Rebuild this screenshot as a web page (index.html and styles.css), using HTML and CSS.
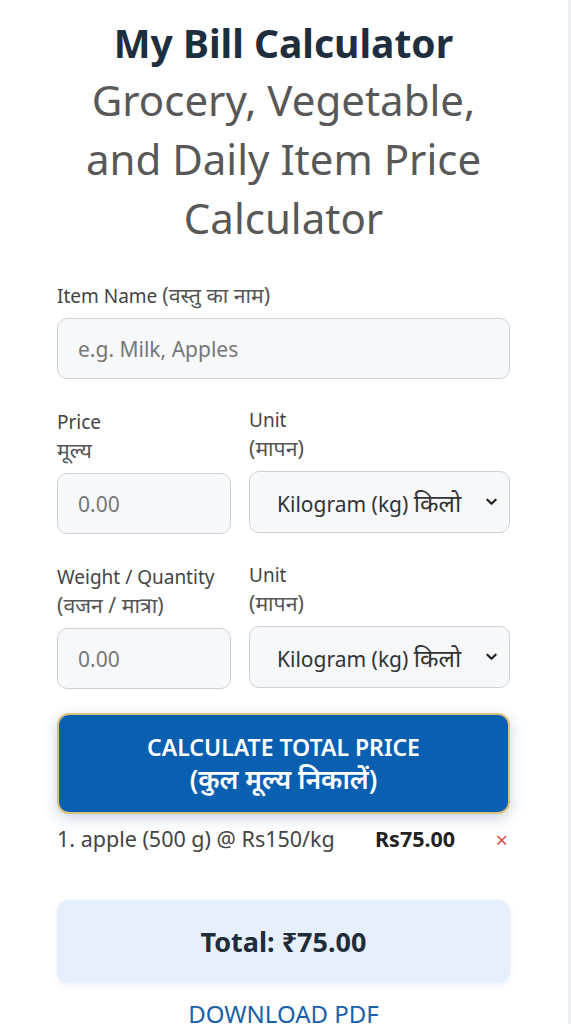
FILE: index.html
```html
<!DOCTYPE html>
<html lang="en">
<head>
<meta charset="utf-8">
<title>My Bill Calculator</title>
<link rel="stylesheet" href="styles.css">
</head>
<body>
<main class="card">
  <header class="head">
    <h1 class="title">My Bill Calculator</h1>
    <p class="subtitle">Grocery, Vegetable, and Daily Item Price Calculator</p>
  </header>

  <div class="field">
    <label class="label">Item Name <span class="hi">(वस्तु का नाम)</span></label>
    <input class="input" type="text" placeholder="e.g. Milk, Apples">
  </div>

  <div class="row">
    <div class="col">
      <label class="label">Price<br><span class="hi">मूल्य</span></label>
      <input class="input" type="text" placeholder="0.00">
    </div>
    <div class="col">
      <label class="label">Unit<br><span class="hi">(मापन)</span></label>
      <div class="select">
        <span>Kilogram (kg) <span class="hi2">किलो</span></span>
        <svg class="chev" viewBox="0 0 12 8" width="11" height="8"><path d="M1.5 1.5 L6 6 L10.5 1.5" fill="none" stroke="#222" stroke-width="2.4" stroke-linecap="round" stroke-linejoin="round"/></svg>
      </div>
    </div>
  </div>

  <div class="row">
    <div class="col">
      <label class="label">Weight / Quantity<br><span class="hi">(वजन / मात्रा)</span></label>
      <input class="input" type="text" placeholder="0.00">
    </div>
    <div class="col">
      <label class="label">Unit<br><span class="hi">(मापन)</span></label>
      <div class="select">
        <span>Kilogram (kg) <span class="hi2">किलो</span></span>
        <svg class="chev" viewBox="0 0 12 8" width="11" height="8"><path d="M1.5 1.5 L6 6 L10.5 1.5" fill="none" stroke="#222" stroke-width="2.4" stroke-linecap="round" stroke-linejoin="round"/></svg>
      </div>
    </div>
  </div>

  <button class="calc" type="button">CALCULATE TOTAL PRICE<br><span class="hi2">(कुल मूल्य निकालें)</span></button>

  <div class="item">
    <span class="desc">1. apple (500 g) @ Rs150/kg</span>
    <span class="amt">Rs75.00</span>
    <span class="del">×</span>
  </div>

  <div class="total">Total: ₹75.00</div>

  <div class="pdf">DOWNLOAD PDF</div>
</main>
</body>
</html>
```

FILE: styles.css
```css
html, body {
  margin: 0;
  padding: 0;
}
body {
  background: #eceef2;
  font-family: "Noto Sans", "Open Sans", sans-serif;
  color: #333;
}
.card {
  width: 568px;
  min-height: 1024px;
  box-sizing: border-box;
  background: #fff;
  padding: 18px 58px 0 57px;
}
.head {
  text-align: center;
}
.title {
  margin: 0;
  font-size: 39px;
  line-height: 50px;
  font-weight: 700;
  color: #1f2e3e;
}
.subtitle {
  margin: 2px auto 0;
  max-width: 420px;
  font-size: 42px;
  line-height: 59px;
  font-weight: 400;
  color: #585858;
}
.field {
  margin-top: 34px;
}
.label {
  display: block;
  font-size: 19px;
  line-height: 28px;
  color: #444;
  margin-bottom: 8px;
}
.hi {
  color: #555;
  font-size: 1.12em;
}
.hi2 {
  font-size: 1.15em;
}
.input {
  display: block;
  box-sizing: border-box;
  width: 100%;
  height: 61px;
  border: 1px solid #cfd3d8;
  border-radius: 10px;
  background: #f6f8fa;
  padding: 0 20px;
  font-family: inherit;
  font-size: 21px;
  color: #333;
}
.input::placeholder {
  color: #777;
}
.row {
  display: grid;
  grid-template-columns: 174px 1fr;
  column-gap: 18px;
  align-items: end;
  margin-top: 27px;
}
.select {
  box-sizing: border-box;
  height: 62px;
  border: 1px solid #cfd3d8;
  border-radius: 10px;
  background: #f6f8fa;
  display: flex;
  align-items: center;
  justify-content: space-between;
  padding: 0 12px 0 27px;
  font-size: 21px;
  color: #333;
  margin-bottom: 1px;
  white-space: nowrap;
}
.calc {
  display: block;
  width: 100%;
  margin-top: 24px;
  height: 101px;
  box-sizing: border-box;
  background: #0a60b0;
  border: 2px solid #d9c27a;
  border-radius: 12px;
  color: #fff;
  font-family: inherit;
  font-size: 23px;
  font-weight: 600;
  line-height: 32px;
  box-shadow: 0 4px 14px rgba(40, 80, 140, 0.25);
}
.item {
  display: flex;
  align-items: center;
  margin-top: 10px;
  font-size: 21.5px;
  line-height: 30px;
  color: #444;
}
.desc {
  width: 318px;
}
.amt {
  font-weight: 700;
  color: #222;
}
.del {
  margin-left: auto;
  margin-right: 2px;
  color: #d9534f;
  font-size: 22px;
}
.total {
  margin-top: 46px;
  height: 83px;
  border-radius: 12px;
  background: #e6effc;
  box-shadow: 0 2px 6px rgba(100, 140, 200, 0.15);
  display: flex;
  align-items: center;
  justify-content: center;
  font-size: 27px;
  font-weight: 700;
  color: #222c38;
}
.pdf {
  margin-top: 16px;
  text-align: center;
  font-size: 24px;
  line-height: 30px;
  color: #1b5fa8;
}
```
